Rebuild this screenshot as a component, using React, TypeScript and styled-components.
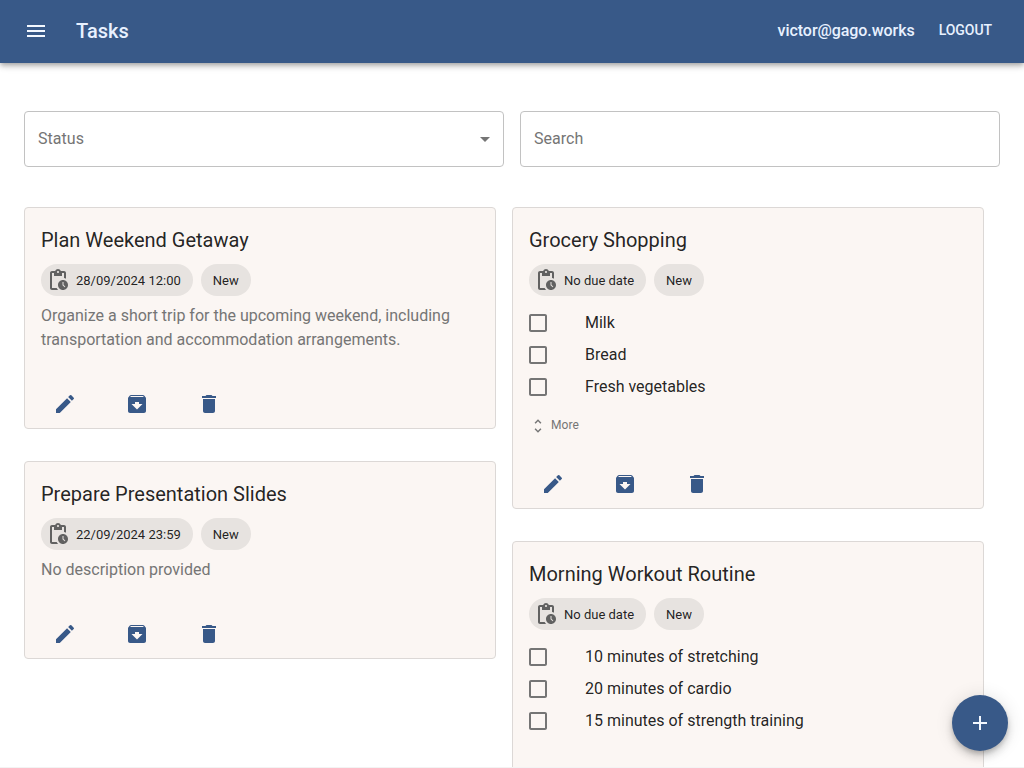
import React from 'react';
import styled, { createGlobalStyle } from 'styled-components';
import {
  MdAdd,
  MdArchive,
  MdArrowDropDown,
  MdCheckBoxOutlineBlank,
  MdDelete,
  MdEdit,
  MdMenu,
  MdPendingActions,
  MdUnfoldMore,
} from 'react-icons/md';

const GlobalStyle = createGlobalStyle`
  * { box-sizing: border-box; }
  body {
    margin: 0;
    background: #fff;
    color: rgba(0, 0, 0, 0.87);
    font-family: Roboto, "Liberation Sans", sans-serif;
    font-size: 16px;
    line-height: 24px;
  }
  button { font: inherit; letter-spacing: inherit; border: 0; background: none; padding: 0; cursor: pointer; }
`;

const Page = styled.div`
  height: 768px;
  overflow: hidden;
  display: flex;
  flex-direction: column;
  border-bottom: 1px solid #f3f3f3;
`;

const TopBar = styled.header`
  flex: none;
  height: 63px;
  padding: 0 24px;
  display: flex;
  align-items: center;
  background: #385988;
  color: #e8f1ff;
  box-shadow: 0 2px 4px -1px rgba(0, 0, 0, 0.2), 0 4px 5px rgba(0, 0, 0, 0.14), 0 1px 10px rgba(0, 0, 0, 0.12);
`;

const MenuButton = styled.button`
  && { padding-bottom: 1px; }
  display: flex;
  color: #f3f8ff;
  margin-right: 28px;
`;

const AppTitle = styled.h1`
  flex: 1;
  margin: 0;
  padding-bottom: 1px;
  font-size: 20px;
  font-weight: 500;
  line-height: 32px;
`;

const UserEmail = styled.span`
  font-weight: 500;
  letter-spacing: -0.06px;
  margin-right: 16px;
  padding-bottom: 2px;
`;

const LogoutButton = styled.button`
  && {
    color: inherit;
    padding: 5px 8px 8px;
    font-size: 14px;
    font-weight: 500;
    letter-spacing: -0.05px;
  }
`;

const Content = styled.main`
  flex: 1;
  min-height: 0;
  padding: 48px 24px 0;
`;

const Filters = styled.div`
  display: grid;
  grid-template-columns: 1fr 1fr;
  gap: 16px;
  margin-bottom: 40px;
`;

const Field = styled.div`
  height: 56px;
  padding: 0 6px 0 13px;
  display: flex;
  align-items: center;
  justify-content: space-between;
  border: 1px solid #c2c2c2;
  border-radius: 4px;
  color: #757575;
  letter-spacing: 0.04px;
`;

const Board = styled.div`
  display: flex;
  align-items: flex-start;
  gap: 16px;
`;

const Column = styled.div`
  width: 472px;
  display: flex;
  flex-direction: column;
  gap: 32px;
`;

const Card = styled.article`
  border: 1px solid #dcd8d6;
  border-radius: 4px;
  background: #fbf6f3;
  padding: 16px 16px 0;
`;

const CardTitle = styled.h2`
  margin: 0 0 8px;
  font-size: 20px;
  font-weight: 400;
  line-height: 32px;
`;

const Chips = styled.div`
  display: flex;
  gap: 8px;
`;

const Chip = styled.span`
  height: 32px;
  min-width: 50px;
  padding: 1px 12px 0;
  display: inline-flex;
  align-items: center;
  border-radius: 16px;
  background: #e7e3e0;
  font-size: 13px;
  svg { color: #616161; margin: -1px 6px 0 -7px; flex: none; }
`;

const Description = styled.p`
  margin: 8px 0 28px;
  color: #757575;
`;

const CheckList = styled.ul`
  list-style: none;
  margin: 11px 0 0;
  padding: 0;
`;

const CheckItem = styled.li`
  height: 32px;
  display: flex;
  align-items: center;
  gap: 35px;
  svg { color: #757575; margin-left: -3px; }
`;

const MoreButton = styled.button`
  && {
    display: flex;
    align-items: center;
    gap: 4px;
    height: 18px;
    margin: 13px 0 -2px;
    color: #757575;
    font-size: 12px;
    letter-spacing: 0.1px;
  }
  svg { position: relative; top: 1px; }
`;

const Actions = styled.div`
  display: flex;
  gap: 24px;
  margin-top: 28px;
`;

const ActionButton = styled.button`
  width: 48px;
  height: 48px;
  display: grid;
  place-items: center;
  color: #385988;
`;

const Fab = styled.button`
  position: fixed;
  right: 16px;
  bottom: 17px;
  width: 56px;
  height: 56px;
  border-radius: 50%;
  display: grid;
  place-items: center;
  && { background: #385988; }
  color: #f3f8ff;
  box-shadow: 0 3px 5px -1px rgba(0, 0, 0, 0.2), 0 6px 10px rgba(0, 0, 0, 0.14), 0 1px 18px rgba(0, 0, 0, 0.12);
`;

interface Task {
  title: string;
  due: string;
  description?: string;
  items?: string[];
  hasMore?: boolean;
}

const leftTasks: Task[] = [
  {
    title: 'Plan Weekend Getaway',
    due: '28/09/2024 12:00',
    description:
      'Organize a short trip for the upcoming weekend, including transportation and accommodation arrangements.',
  },
  { title: 'Prepare Presentation Slides', due: '22/09/2024 23:59', description: 'No description provided' },
];

const rightTasks: Task[] = [
  { title: 'Grocery Shopping', due: 'No due date', items: ['Milk', 'Bread', 'Fresh vegetables'], hasMore: true },
  {
    title: 'Morning Workout Routine',
    due: 'No due date',
    items: ['10 minutes of stretching', '20 minutes of cardio', '15 minutes of strength training'],
  },
];

function TaskCard({ task }: { task: Task }) {
  return (
    <Card>
      <CardTitle>{task.title}</CardTitle>
      <Chips>
        <Chip>
          <MdPendingActions size={24} />
          {task.due}
        </Chip>
        <Chip>New</Chip>
      </Chips>
      {task.description && <Description>{task.description}</Description>}
      {task.items && (
        <CheckList>
          {task.items.map((item) => (
            <CheckItem key={item}>
              <MdCheckBoxOutlineBlank size={24} />
              {item}
            </CheckItem>
          ))}
        </CheckList>
      )}
      {task.hasMore && (
        <MoreButton>
          <MdUnfoldMore size={18} />
          More
        </MoreButton>
      )}
      <Actions>
        <ActionButton aria-label="Edit"><MdEdit size={24} /></ActionButton>
        <ActionButton aria-label="Archive"><MdArchive size={24} /></ActionButton>
        <ActionButton aria-label="Delete"><MdDelete size={24} /></ActionButton>
      </Actions>
    </Card>
  );
}

export default function App() {
  return (
    <Page>
      <GlobalStyle />
      <TopBar>
        <MenuButton aria-label="Menu"><MdMenu size={24} /></MenuButton>
        <AppTitle>Tasks</AppTitle>
        <UserEmail>victor@gago.works</UserEmail>
        <LogoutButton>LOGOUT</LogoutButton>
      </TopBar>
      <Content>
        <Filters>
          <Field>
            Status
            <MdArrowDropDown size={24} />
          </Field>
          <Field>Search</Field>
        </Filters>
        <Board>
          <Column>{leftTasks.map((t) => <TaskCard key={t.title} task={t} />)}</Column>
          <Column>{rightTasks.map((t) => <TaskCard key={t.title} task={t} />)}</Column>
        </Board>
      </Content>
      <Fab aria-label="Add"><MdAdd size={24} /></Fab>
    </Page>
  );
}
